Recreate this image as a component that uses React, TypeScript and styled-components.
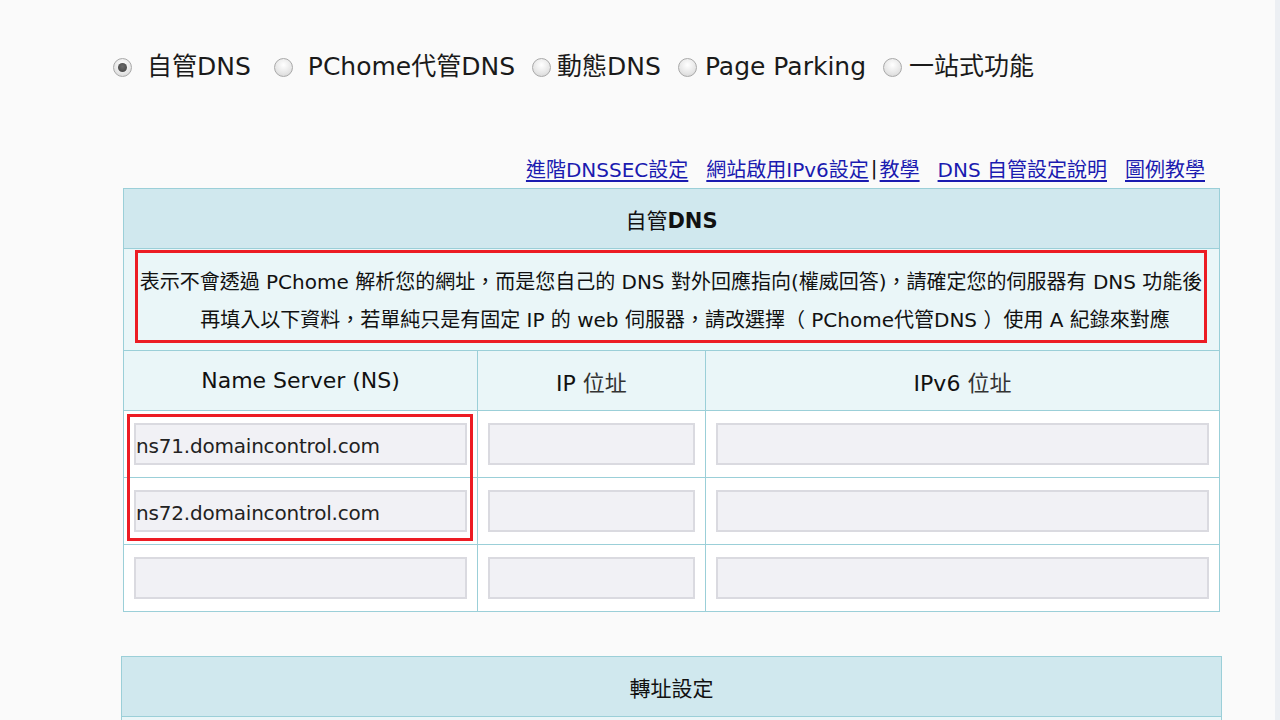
import React from "react";
import styled, { createGlobalStyle } from "styled-components";

const GlobalStyle = createGlobalStyle`
  html {
    background: linear-gradient(to right, #fafafa calc(100% - 5px), #eceff3 calc(100% - 5px));
  }
  body {
    margin: 0;
    font-family: "DejaVu Sans", "Noto Sans CJK TC", sans-serif;
    color: #111;
  }
`;

const Page = styled.div`
  width: 1117px;
  margin-left: 113px;
  padding-top: 50px;
`;

const RadioRow = styled.div`
  display: flex;
  align-items: center;
  gap: 17px;
  height: 34px;
  font-size: 25px;
  line-height: 34px;
  color: #1a1a1a;
`;

const Option = styled.label<{ $lead: number; $trail?: number }>`
  display: flex;
  align-items: center;
  gap: ${({ $lead }) => $lead}px;
  margin-right: ${({ $trail }) => $trail ?? 0}px;
  height: 34px;
  line-height: 34px;
  white-space: nowrap;
`;

const Radio = styled.span<{ $checked?: boolean }>`
  position: relative;
  width: 17px;
  height: 17px;
  border-radius: 50%;
  border: 1px solid #a9a9a9;
  background: radial-gradient(circle at 50% 35%, #ffffff 0%, #e6e6e6 60%, #cfcfcf 100%);
  box-sizing: content-box;
  flex-shrink: 0;

  &::after {
    content: "";
    display: ${({ $checked }) => ($checked ? "block" : "none")};
    position: absolute;
    left: 4px;
    top: 4px;
    width: 9px;
    height: 9px;
    border-radius: 50%;
    background: radial-gradient(circle at 50% 40%, #6a6a6a, #3e3e3e);
  }
`;

const LinkRow = styled.div`
  display: flex;
  justify-content: flex-end;
  align-items: center;
  gap: 18px;
  height: 24px;
  margin-top: 72px;
  margin-bottom: 8px;
  padding-right: 25px;
  font-size: 20px;
`;

const LinkGroup = styled.span`
  display: flex;
  align-items: center;
  gap: 2px;
`;

const Link = styled.a`
  color: #1b1bb0;
  text-decoration: underline;
  text-underline-offset: 3px;
  cursor: pointer;
`;

const Divider = styled.span`
  color: #111;
`;

const TableWrap = styled.div`
  position: relative;
  margin-left: 10px;
  width: 1097px;
`;

const Table = styled.table`
  width: 100%;
  border-collapse: collapse;
  table-layout: fixed;
  border: 1px solid #9bcfd8;
  font-size: 20px;
`;

const TitleCell = styled.th`
  height: 59px;
  background: #d0e8ee;
  border: 1px solid #9bcfd8;
  font-weight: normal;
  font-size: 21px;
  text-align: center;
  padding: 0;

  b {
    font-weight: bold;
  }
`;

const NoteCell = styled.td`
  background: #eaf6f8;
  border: 1px solid #9bcfd8;
  padding: 1px 12px 7px 11px;
`;

const Highlight = styled.div`
  border: 3px solid #ec1c24;
  padding: 10px 0 1px;
  text-align: center;
  line-height: 38px;
  white-space: nowrap;
`;

const SecondLine = styled.span`
  padding-left: 28px;
`;

const HeadCell = styled.th`
  height: 59px;
  background: #eaf6f8;
  border: 1px solid #9bcfd8;
  font-weight: normal;
  font-size: 22px;
  padding: 0;
  text-align: center;

  span {
    color: #333;
  }
`;

const DataCell = styled.td`
  height: 66px;
  background: #fff;
  border: 1px solid #9bcfd8;
  padding: 0 10px;
`;

const Field = styled.input`
  display: block;
  box-sizing: border-box;
  width: 100%;
  height: 42px;
  margin: 0;
  padding: 4px 0 0;
  background: #f1f1f5;
  border: 2px solid #dadae0;
  font-family: "DejaVu Sans", "Noto Sans CJK TC", sans-serif;
  font-size: 20px;
  letter-spacing: -0.2px;
  color: #222;
  outline: none;
`;

const Annotation = styled.div`
  position: absolute;
  left: 4px;
  top: 226px;
  width: 346px;
  height: 127px;
  box-sizing: border-box;
  border: 3px solid #ec1c24;
  pointer-events: none;
`;

const SecondTable = styled.div`
  margin-top: 44px;
  margin-left: 8px;
  width: 1101px;
`;

const BlankCell = styled.td`
  height: 40px;
  background: #eaf6f8;
  border: 1px solid #9bcfd8;
`;

const options = [
  { label: "自管DNS", checked: true, lead: 15, trail: 6 },
  { label: "PChome代管DNS", lead: 15 },
  { label: "動態DNS", lead: 6 },
  { label: "Page Parking", lead: 8 },
  { label: "一站式功能", lead: 7 },
];

const servers = ["ns71.domaincontrol.com", "ns72.domaincontrol.com", ""];

const App = () => {
  return (
    <>
      <GlobalStyle />
      <Page>
        <RadioRow>
          {options.map((opt) => (
            <Option key={opt.label} $lead={opt.lead} $trail={opt.trail}>
              <Radio $checked={opt.checked} />
              {opt.label}
            </Option>
          ))}
        </RadioRow>

        <LinkRow>
          <Link>進階DNSSEC設定</Link>
          <LinkGroup>
            <Link>網站啟用IPv6設定</Link>
            <Divider>|</Divider>
            <Link>教學</Link>
          </LinkGroup>
          <Link>DNS 自管設定說明</Link>
          <Link>圖例教學</Link>
        </LinkRow>

        <TableWrap>
          <Table>
            <colgroup>
              <col style={{ width: 354 }} />
              <col style={{ width: 228 }} />
              <col />
            </colgroup>
            <thead>
              <tr>
                <TitleCell colSpan={3}>
                  自管<b>DNS</b>
                </TitleCell>
              </tr>
            </thead>
            <tbody>
              <tr>
                <NoteCell colSpan={3}>
                  <Highlight>
                    表示不會透過 PChome 解析您的網址，而是您自己的 DNS 對外回應指向(權威回答)，請確定您的伺服器有 DNS 功能後
                    <br />
                    <SecondLine>
                      再填入以下資料，若單純只是有固定 IP 的 web 伺服器，請改選擇（ PChome代管DNS ）使用 A 紀錄來對應
                    </SecondLine>
                  </Highlight>
                </NoteCell>
              </tr>
              <tr>
                <HeadCell>Name Server (NS)</HeadCell>
                <HeadCell>
                  IP <span>位址</span>
                </HeadCell>
                <HeadCell>
                  IPv6 <span>位址</span>
                </HeadCell>
              </tr>
              {servers.map((ns, i) => (
                <tr key={i}>
                  <DataCell>
                    <Field readOnly value={ns} />
                  </DataCell>
                  <DataCell>
                    <Field readOnly value="" />
                  </DataCell>
                  <DataCell>
                    <Field readOnly value="" />
                  </DataCell>
                </tr>
              ))}
            </tbody>
          </Table>
          <Annotation />
        </TableWrap>

        <SecondTable>
          <Table>
            <thead>
              <tr>
                <TitleCell>轉址設定</TitleCell>
              </tr>
            </thead>
            <tbody>
              <tr>
                <BlankCell />
              </tr>
            </tbody>
          </Table>
        </SecondTable>
      </Page>
    </>
  );
};

export default App;
